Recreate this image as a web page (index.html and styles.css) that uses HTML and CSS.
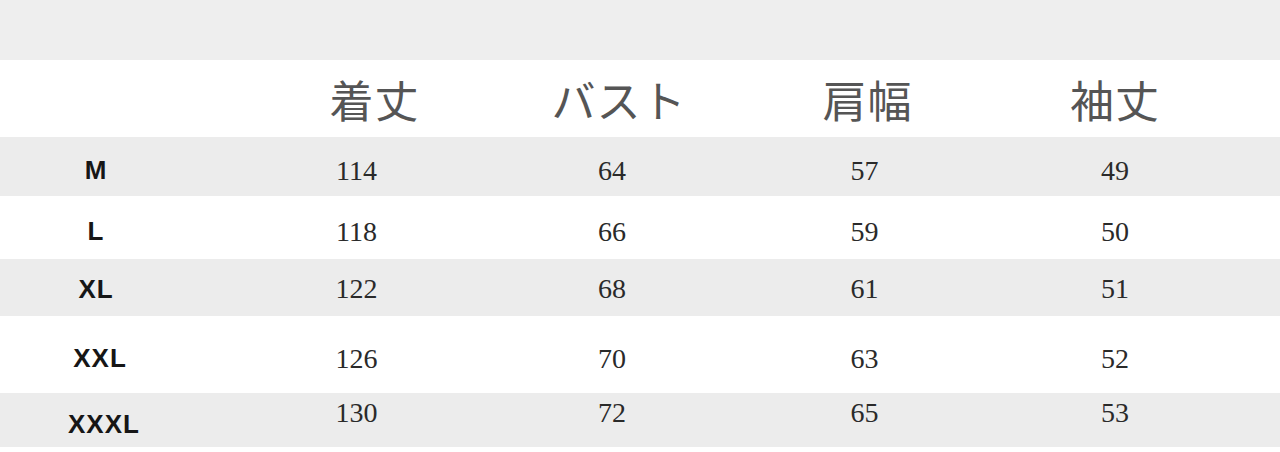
FILE: index.html
```html
<!DOCTYPE html>
<html lang="ja">
<head>
<meta charset="utf-8">
<title>サイズ表</title>
<link rel="stylesheet" href="styles.css">
</head>
<body>
<div class="chart">
  <div class="top-band"></div>
  <div class="row row-head">
    <div class="cell"></div>
    <div class="cell head head-1">着丈</div>
    <div class="cell head head-2">バスト</div>
    <div class="cell head head-3">肩幅</div>
    <div class="cell head">袖丈</div>
  </div>
  <div class="row grey r-m">
    <div class="cell size">M</div>
    <div class="cell num">114</div>
    <div class="cell num">64</div>
    <div class="cell num">57</div>
    <div class="cell num">49</div>
  </div>
  <div class="row r-l">
    <div class="cell size">L</div>
    <div class="cell num">118</div>
    <div class="cell num">66</div>
    <div class="cell num">59</div>
    <div class="cell num">50</div>
  </div>
  <div class="row grey r-xl">
    <div class="cell size">XL</div>
    <div class="cell num">122</div>
    <div class="cell num">68</div>
    <div class="cell num">61</div>
    <div class="cell num">51</div>
  </div>
  <div class="row r-xxl">
    <div class="cell size">XXL</div>
    <div class="cell num">126</div>
    <div class="cell num">70</div>
    <div class="cell num">63</div>
    <div class="cell num">52</div>
  </div>
  <div class="row grey r-xxxl">
    <div class="cell size">XXXL</div>
    <div class="cell num">130</div>
    <div class="cell num">72</div>
    <div class="cell num">65</div>
    <div class="cell num">53</div>
  </div>
</div>
</body>
</html>
```

FILE: styles.css
```css
html, body {
  margin: 0;
  padding: 0;
  background: #ffffff;
}

body {
  width: 1280px;
  height: 452px;
  overflow: hidden;
}

.chart {
  display: flex;
  flex-direction: column;
}

.top-band {
  height: 60px;
  background: #eeeeee;
}

.row {
  display: grid;
  grid-template-columns: 228px 257px 254px 251px 250px 1fr;
  align-items: center;
}

.row.grey {
  background: #ececec;
}

.row-head { height: 77px; }
.r-m { height: 59px; }
.r-l { height: 63px; }
.r-xl { height: 57px; }
.r-xxl { height: 77px; }
.r-xxxl { height: 54px; }

.cell {
  text-align: center;
  line-height: 1;
}

.head {
  font-family: "Noto Sans CJK JP", "Noto Sans", sans-serif;
  font-size: 44px;
  font-weight: 400;
  color: #555555;
  letter-spacing: 1px;
}

.head-1 { padding-left: 36px; }
.head-2 { padding-left: 14px; }
.head-3 { padding-left: 6px; }

.size {
  font-family: "Liberation Sans", Arial, sans-serif;
  font-weight: 700;
  font-size: 26px;
  letter-spacing: 1px;
  color: #161616;
  padding-right: 36px;
  padding-top: 6px;
}

.num {
  font-family: "Liberation Serif", "Times New Roman", serif;
  font-size: 28px;
  color: #2a2a2a;
  padding-top: 8px;
}

.r-xl .size, .r-xl .num { padding-top: 2px; }
.r-xxl .size { padding-right: 28px; }
.r-xxxl .num { padding-top: 0; padding-bottom: 14px; }
.r-xxxl .size { padding-top: 8px; padding-right: 20px; }
```
